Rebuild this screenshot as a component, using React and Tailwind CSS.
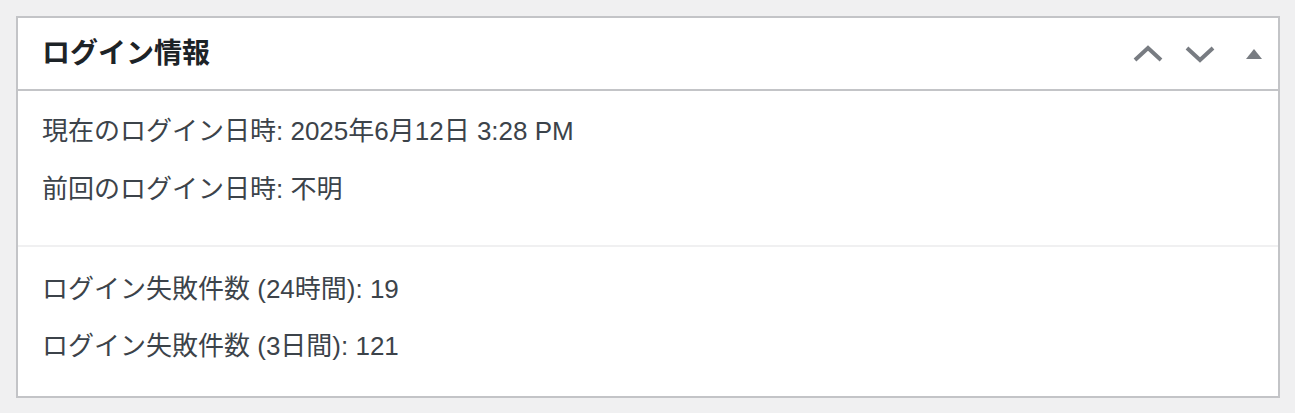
export default function App() {
  const font = { fontFamily: '"Liberation Sans", "Noto Sans CJK JP", sans-serif' };
  return (
    <div className="min-h-[413px] bg-[#f0f0f1] pt-4 pl-4 pr-[15px]" style={font}>
      <div className="w-[1264px] h-[382px] border-2 border-[#c3c4c7] bg-white flex flex-col">
        <div className="h-[73px] flex items-center border-b-2 border-[#c3c4c7] pl-[24px] pr-[15px]">
          <h2 className="flex-1 text-[28px] font-bold text-[#1d2327] leading-none">ログイン情報</h2>
          <div className="flex items-center">
            <svg width="32" height="20" viewBox="0 0 32 20" className="mr-[20px]">
              <path d="M3 16 L16 4 L29 16" fill="none" stroke="#787c82" strokeWidth="4" />
            </svg>
            <svg width="32" height="20" viewBox="0 0 32 20" className="mr-[29px]">
              <path d="M3 4 L16 16 L29 4" fill="none" stroke="#787c82" strokeWidth="4" />
            </svg>
            <svg width="18" height="12" viewBox="0 0 18 12">
              <path d="M9 1 L17 11 L1 11 Z" fill="#787c82" />
            </svg>
          </div>
        </div>
        <div className="px-[24px] pt-[24px] pb-[40px] border-b-2 border-[#f0f0f1] text-[26px] leading-[32px] text-[#3c434a] flex flex-col gap-[26px]">
          <p>現在のログイン日時: 2025年6月12日 3:28 PM</p>
          <p>前回のログイン日時: 不明</p>
        </div>
        <div className="px-[24px] pt-[26px] text-[26px] leading-[32px] text-[#3c434a] flex flex-col gap-[25px]">
          <p>ログイン失敗件数 (24時間): 19</p>
          <p>ログイン失敗件数 (3日間): 121</p>
        </div>
      </div>
    </div>
  );
}
